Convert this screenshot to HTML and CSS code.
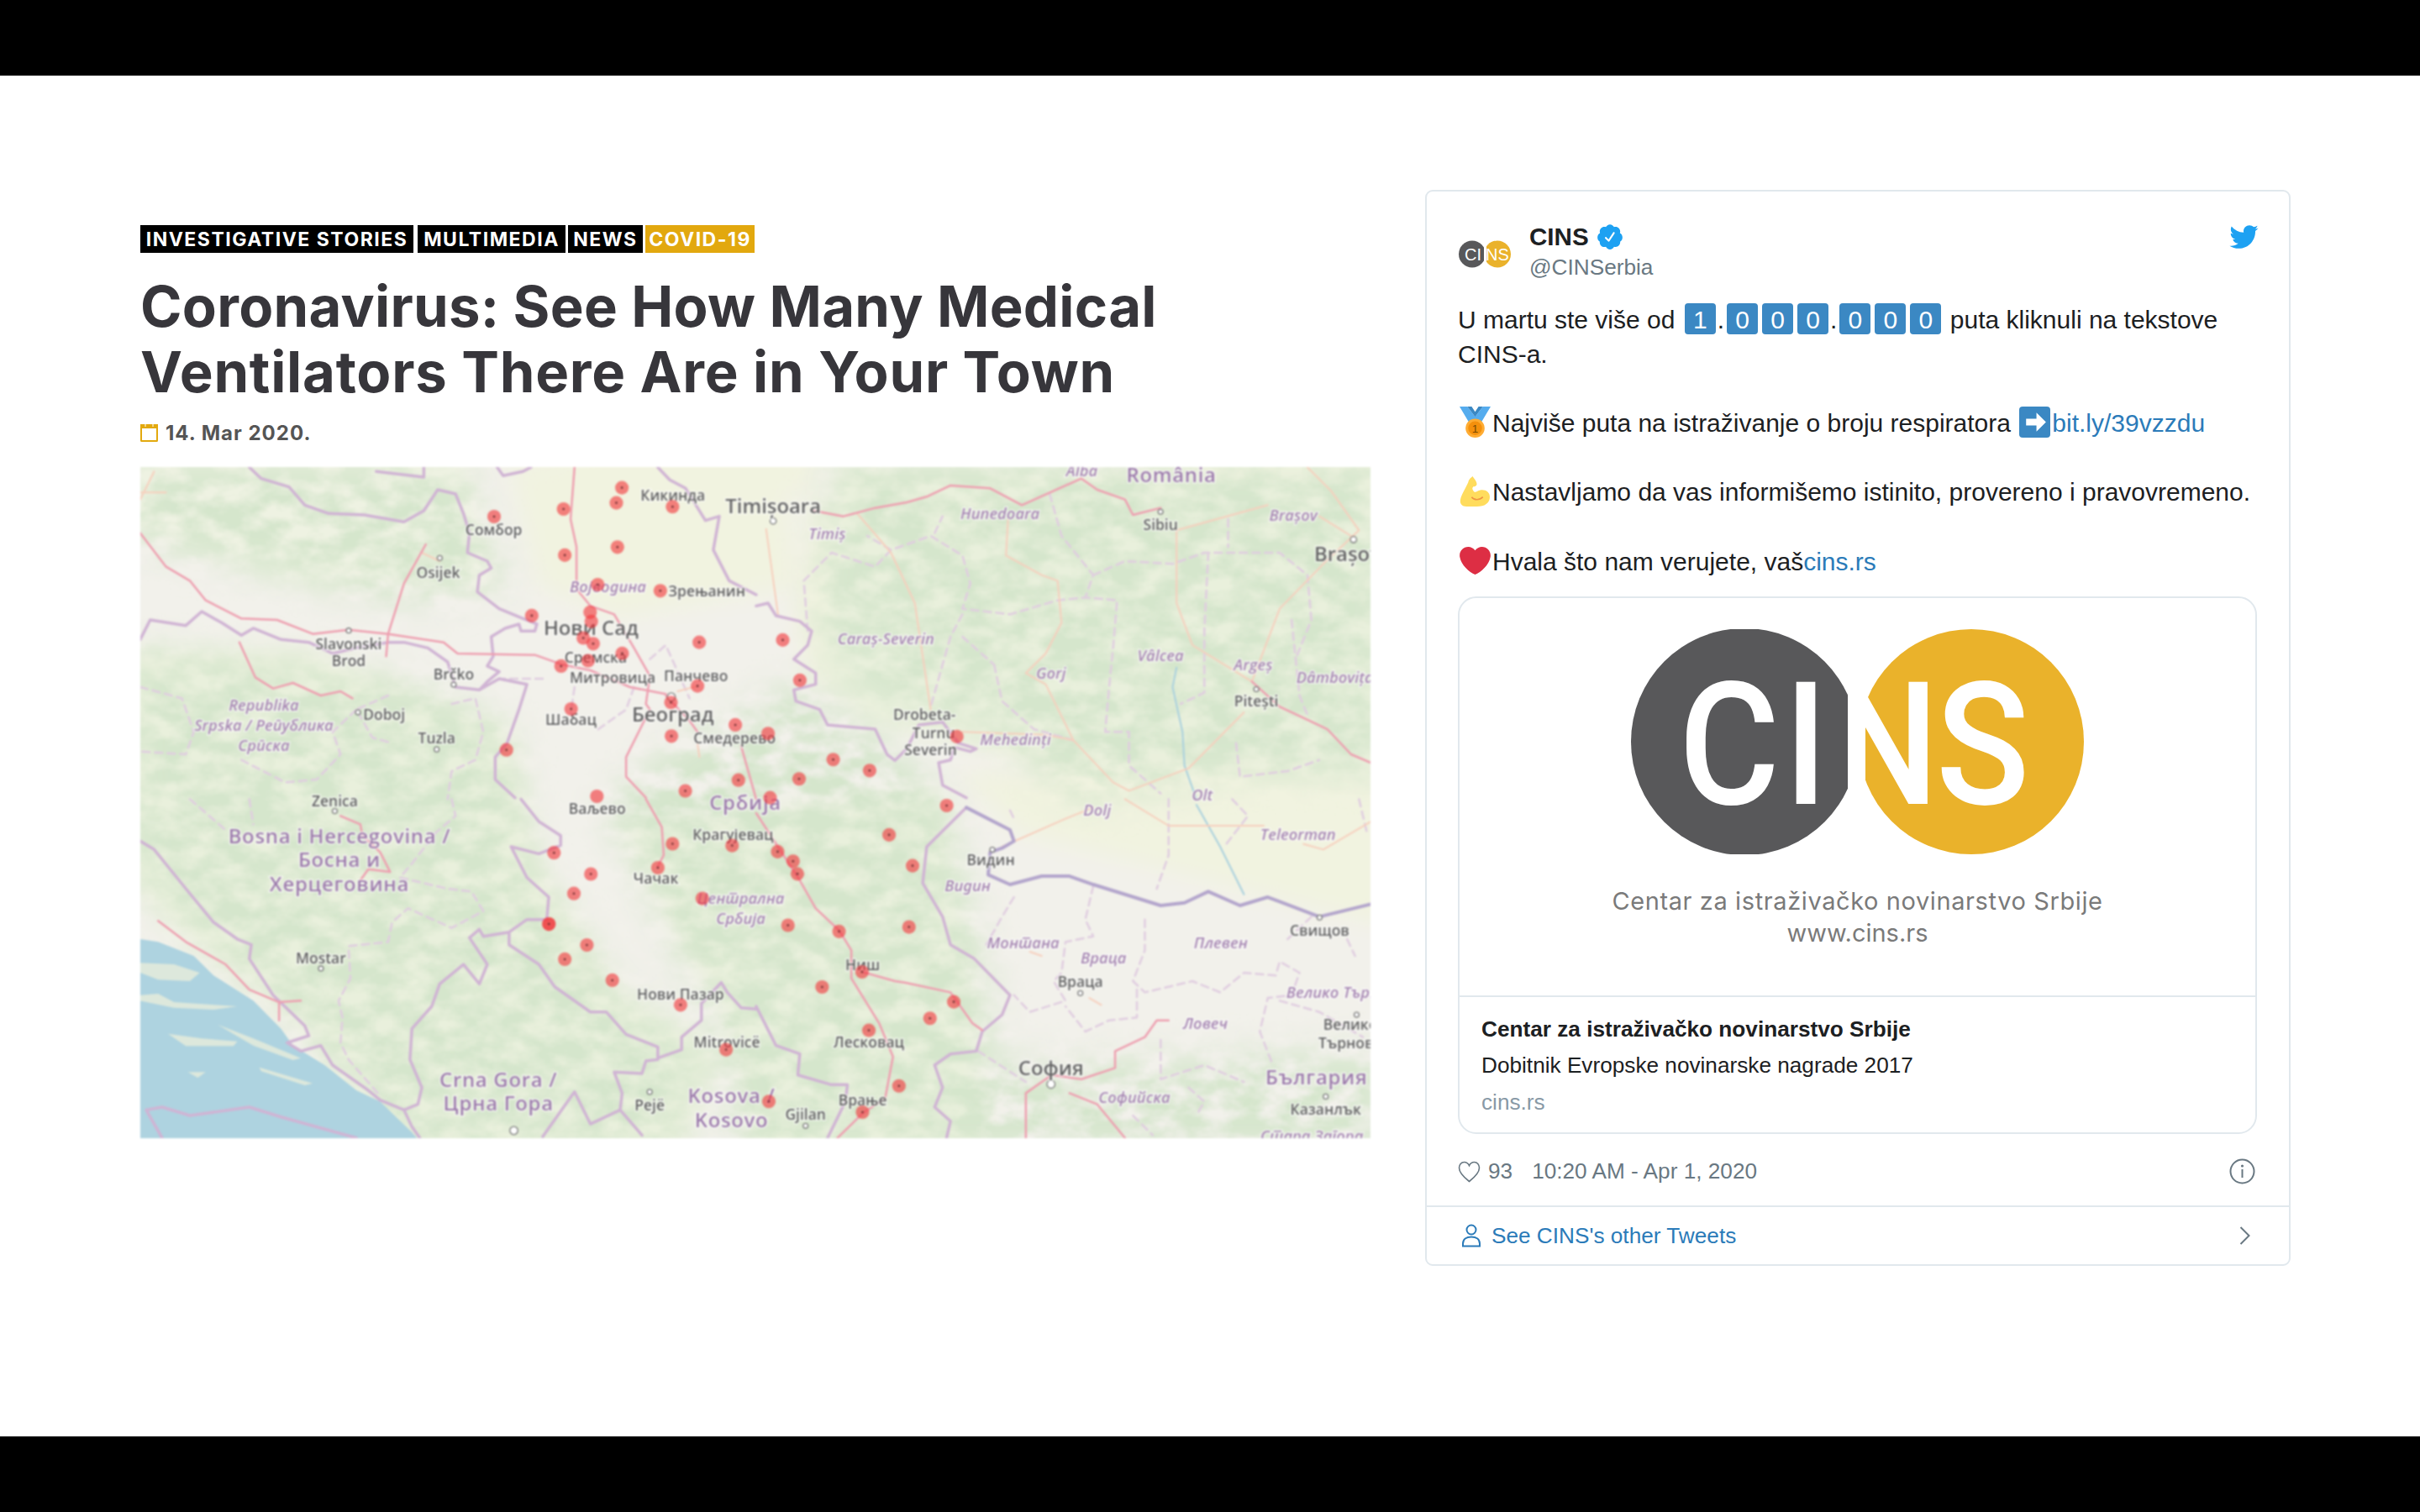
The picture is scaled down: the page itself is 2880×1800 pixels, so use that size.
FILE: index.html
```html
<!DOCTYPE html>
<html lang="sr">
<head>
<meta charset="utf-8">
<title>Coronavirus: See How Many Medical Ventilators There Are in Your Town</title>
<link rel="stylesheet" href="styles.css">
</head>
<body>
<div class="bar"></div>
<main class="main">
  <article class="story">
    <div class="tags">
      <span class="tag t1">INVESTIGATIVE STORIES</span>
      <span class="tag t2">MULTIMEDIA</span>
      <span class="tag t3">NEWS</span>
      <span class="tag t4 gold">COVID-19</span>
    </div>
    <h1 class="title"><span class="l1">Coronavirus: See How Many Medical</span><br><span class="l2">Ventilators There Are in Your Town</span></h1>
    <div class="date">
      <svg class="cal" viewBox="0 0 21 22"><path d="M1 4h19v16.5a.5.5 0 0 1-.5.5h-18a.5.5 0 0 1-.5-.5z" fill="#fff" stroke="#e3a90f" stroke-width="2"/><path d="M0 1h21v5H0z" fill="#e3a90f"/><path d="M6 0v4M15 0v4" stroke="#fff" stroke-width="1"/></svg>
      <span>14. Mar 2020.</span>
    </div>
    <svg class="map" viewBox="91 302 797 435" preserveAspectRatio="none">
      <defs>
        <filter id="mottle" filterUnits="userSpaceOnUse" x="91" y="302" width="797" height="435" color-interpolation-filters="sRGB">
          <feGaussianBlur in="SourceGraphic" stdDeviation="12" result="b"/>
          <feTurbulence type="fractalNoise" baseFrequency=".05 .08" numOctaves="5" seed="7"/>
          <feColorMatrix values="0 0 0 0 .835  0 0 0 0 .90  0 0 0 0 .80  2.6 0 0 0 -.72"/>
          <feComposite in2="b" operator="in"/>
        </filter>
        <filter id="soft" x="-10%" y="-10%" width="120%" height="120%"><feGaussianBlur stdDeviation="7"/></filter>
      </defs>
      <rect x="91" y="302" width="797" height="435" fill="#f2f1eb"/>
      <!-- plains -->
      <g filter="url(#soft)" fill="#f1f3e0">
        <path d="M300 290H530L515 400 525 440 600 470 660 490 900 570V290H760L700 400 600 400 530 320z"/>
        <path d="M620 500H900V600L780 570 660 540z"/>
        <path d="M75 290H300L320 380 200 380 75 340z" fill="#eef2e2"/>
        <path d="M330 300H510L515 380 400 400 350 380z"/>
      </g>
      <g filter="url(#soft)" fill="#e9f0dc">
        <path d="M75 420 200 420 330 470 350 560 400 640 470 680 440 750H270L190 660 110 600 75 560z"/>
        <path d="M540 300H900V510L820 500 700 500 640 480 560 470 530 420z"/>
        <path d="M400 530 520 520 610 510 630 630 640 750H490L470 660 440 610z"/>
      </g>
      <path class="mott" filter="url(#mottle)" d="M85 300 300 300 330 380 260 390 85 350zM85 420 260 440 330 470 345 560 400 640 450 680 440 745 270 745 190 660 110 590 85 560zM390 520 440 480 520 440 610 510 640 630 650 745 480 745 460 660 430 600zM540 300 895 300 895 500 800 500 700 520 640 470 560 450 530 400zM640 690 895 680 895 745 640 745z"/>
      <!-- sea -->
      <g transform="translate(87.11,517.24) scale(.25694,.18149)">
        <path class="sea" d="M15 500 60 510 150 560 200 630 300 720 370 820 400 880 480 950 560 1040 620 1080 700 1190 730 1240H0V500z"/>
        <path class="isl" d="M15 585 100 590 165 620 140 650 60 645 15 620zM15 700 60 695 100 725 260 740 200 752 100 745 15 720zM85 838 170 855 260 865 250 882 130 882zM210 805 300 855 420 925 400 932 300 880zM315 958 450 1015 430 1022 320 972zM135 975 180 975 160 995z"/>
      </g>
      <!-- admin dashed -->
      <g class="admin">
        <g transform="translate(87.11,299.45) scale(.25694,.18149)">
          <path d="M15 800 120 840 150 960 130 1040 15 1030M640 830 560 880 600 980 650 1000M800 860 860 840 880 960 860 1060 800 1100 790 1200M270 1060 380 1140 460 1130 520 1040 500 960 560 880M1110 800 1100 900M1030 770 930 770M1260 800 1240 880 1160 960M1300 700 1340 650 1400 840"/>
        </g>
        <g transform="translate(490,299.45) scale(.25694,.18149)">
          <path d="M130 600 120 420 190 320 300 370 340 310 440 260 520 330 540 430 520 520 640 540 760 490 830 480 910 490 900 660 890 800 880 960 940 960 940 1080 1020 1180M340 310 280 260M450 250 470 190M740 110 770 260 850 400 830 480M850 400 930 350 1050 360 1130 320 1320 320 1390 400 1400 560 1360 700M1190 200 1190 300M1140 320 1130 600 1130 820 1070 860M600 720 620 850 700 950 800 990M520 620 600 720M520 540 490 620 440 870M1210 1000 1220 1120 1340 1100 1420 1060M1350 560 1370 830 1390 900"/>
        </g>
        <g transform="translate(87.11,517.24) scale(.25694,.18149)">
          <path d="M140 0 230 110M290 0 300 90M800 0 810 60 760 120 700 230 670 280 790 320 850 330 880 400 800 460 690 390 650 440 640 510 540 525 545 640 515 720 525 780 520 870 540 930 620 1060"/>
        </g>
        <g transform="translate(490,517.24) scale(.25694,.18149)">
          <path d="M640 40 650 70M1040 0 1040 200 1010 320M650 350 620 420 580 520M850 310 830 430 850 490 780 510 770 620 750 650 780 720 690 760 650 700M980 430 980 540 950 650 980 690 1100 650 1170 690 1230 620 1310 630 1320 580 1370 620 1350 700 1290 710 1270 830 1300 940M960 680 960 780 890 790 830 830 780 740M1020 860 1020 1000 1130 950 1230 1010M1340 500 1400 420M560 900 680 1010M1490 500 1510 560M1320 720 1420 760 1530 850M1090 1030 1130 1080 1110 1130M950 1130 1000 1200M1200 0 1240 60 1180 170M1520 0 1540 120"/>
        </g>
      </g>
      <!-- rivers -->
      <g class="river">
        <g transform="translate(490,299.45) scale(.25694,.18149)"><path d="M1060 730 1050 800 1075 960 1080 1080 1110 1200"/></g>
        <g transform="translate(490,517.24) scale(.25694,.18149)"><path d="M1110 20 1170 170 1230 340"/></g>
      </g>
      <!-- secondary roads -->
      <g class="road2">
        <g transform="translate(490,299.45) scale(.25694,.18149)">
          <path d="M25 235 55 540M255 180 340 320 400 500 440 880M635 200 630 330 720 400 760 420 770 570 730 680 680 750 730 790 800 990 900 1140 940 1170 1090 1090 1230 890M1060 240 1290 150M1060 240 1060 500 1100 650 1250 780 1320 520 1430 360 1520 240 1450 100 1390 15M1420 190 1500 260M800 990 730 970 520 960"/>
        </g>
        <g transform="translate(490,517.24) scale(.25694,.18149)">
          <path d="M620 170 780 70 850 30M930 0 1040 95 1280 95M1380 160 1430 180 1550 80M840 710 870 735M690 545 720 560"/>
        </g>
        <g transform="translate(87.11,299.45) scale(.25694,.18149)"><path d="M15 130 50 30M15 105 80 105M725 320 770 350M1370 815 1420 796M1420 1000 1425 1050"/></g>
      </g>
      <!-- borders -->
      <g class="border">
        <g transform="translate(87.11,299.45) scale(.25694,.18149)">
          <path d="M290 15 320 55 390 85 430 150 490 180 580 185 680 210 730 170 765 95 810 110 830 180 845 250 840 320 890 350 900 375 870 400 865 460 920 520 980 555 1015 575 1010 600 975 600 970 575 935 590 900 620 905 690 890 725 920 745 890 780 870 810 810 800 790 710 740 660 680 640 640 640 560 660 500 680 440 640 370 630 300 590 270 615 220 570 170 530 130 580 40 560 15 630M870 810 920 770 990 790 970 880 940 1000 910 1050 910 1130 960 1195"/>
          <path d="M610 30 730 50 730 15M915 15 930 45 980 30 1000 15M1320 15 1350 60 1390 90 1440 205 1475 190 1460 310 1500 420 1568 470"/>
        </g>
        <g transform="translate(490,299.45) scale(.25694,.18149)">
          <path d="M0 510 30 500 50 545 110 565 140 600 130 650 95 700 150 750 150 790 95 810 100 850 160 880 180 935 300 950 330 1040 350 1062 380 1020 410 935 470 925 510 1000 555 1020 540 1030 500 1015 490 1060 460 1070 470 1150 530 1195"/>
        </g>
        <g transform="translate(87.11,517.24) scale(.25694,.18149)">
          <path d="M975 0 1020 80 1075 130 1075 165 1020 195 950 170 990 280 1045 350 1040 430 990 430 945 475 880 490 870 465 845 495 890 590 870 660 830 590 770 660 750 740 700 820 695 930 725 1030 715 1090 680 1110"/>
          <path d="M945 480 945 520 1020 590 1060 670 1150 760 1190 760 1240 840 1320 885 1320 930 1290 935 1280 980 1210 975 1230 1050 1225 1110 1150 1160 1110 1045 1030 1205M1320 925 1380 895 1380 850 1430 790 1430 730 1480 655 1495 690 1530 745 1568 750M1225 1110 1280 1200"/>
          <path d="M15 150 50 180 130 320 200 440 260 500 295 520 290 570 350 700 430 810 440 845 385 870 420 900 470 880 500 950 590 1040 620 1075 680 1110 700 1170 720 1210M30 1110 70 1100 140 1130 290 1100 370 1135 560 1210M30 1110 70 1210"/>
        </g>
        <g transform="translate(490,517.24) scale(.25694,.18149)">
          <path d="M530 30 430 170 420 300 470 420 490 520 550 570 640 700 620 770 570 830 555 900 490 910 450 950 470 1030 450 1100 490 1150 480 1210M0 740 25 810 50 880 110 910 105 985 190 1020 230 1020 225 1080 180 1210"/>
          <path class="danube" d="M530 30 640 110 650 150 620 175 590 190 585 270 640 305 720 275 790 275 850 305 1020 380 1080 370 1140 330 1220 380 1290 350 1420 420 1550 375"/>
        </g>
      </g>
      <!-- motorways -->
      <g class="road1">
        <g transform="translate(87.11,299.45) scale(.25694,.18149)">
          <path d="M15 250 80 370 140 420 180 490 270 555 360 560 450 610 540 595 640 610 780 640 815 680 1010 685 1080 720 1150 740 1250 800 1340 825M1110 15 1100 200 1115 300 1115 450 1150 510 1210 540 1260 660 1300 760 1290 860 1300 880 1240 1050 1240 1120 1290 1195M1340 830 1400 920 1420 960M1530 1010 1568 1200M735 290 680 430 640 610 635 690M265 640 305 765 350 805 400 785 470 830 520 815 550 840"/>
        </g>
        <g transform="translate(490,299.45) scale(.25694,.18149)">
          <path d="M145 170 220 190 300 160 380 140 430 120 490 80 590 90 670 150 820 55 860 95 930 130 950 185 1020 160M1250 780 1320 870 1380 910 1440 950 1500 1040 1550 1070"/>
        </g>
        <g transform="translate(87.11,517.24) scale(.25694,.18149)">
          <path d="M1290 0 1330 100 1335 200 1320 240M60 435 130 510 230 590 290 680 365 725 420 720M365 725 365 790M520 60 570 90 575 130 620 190 645 260 590 250 570 290"/>
        </g>
        <g transform="translate(490,517.24) scale(.25694,.18149)">
          <path d="M0 50 55 170 110 290 150 390 210 470 240 540 240 640 310 800 345 920 325 1070 270 1120 205 1210M267 617 350 650 375 655 490 690 545 800 570 825M1040 790 1010 790 980 850 905 900 905 960 820 1000 745 985 680 1050 680 1210M790 1050 860 1090 930 1210"/>
        </g>
      </g>
      <!-- towns -->
      <g class="dot">
        <circle cx="285" cy="361" r="1.6"/><circle cx="226" cy="408" r="1.6"/><circle cx="294" cy="443" r="1.6"/><circle cx="232" cy="461" r="1.6"/><circle cx="283" cy="485" r="1.6"/><circle cx="217" cy="525" r="1.6"/><circle cx="208" cy="627" r="1.6"/><circle cx="421" cy="707" r="1.6"/>
        <circle cx="501" cy="337" r="2"/><circle cx="752" cy="331" r="1.6"/><circle cx="877" cy="349" r="2"/><circle cx="814" cy="446" r="1.6"/><circle cx="643" cy="550" r="1.6"/><circle cx="700" cy="643" r="1.6"/><circle cx="855" cy="594" r="1.6"/><circle cx="879" cy="657" r="1.6"/><circle cx="859" cy="710" r="1.6"/><circle cx="522" cy="729" r="1.6"/>
        <circle cx="333" cy="732" r="2.6"/><circle cx="681" cy="702" r="2.6"/><circle cx="435" cy="451" r="2.6"/>
      </g>
      <!-- labels -->
      <g class="place">
        <text x="320" y="346">Сомбор</text><text x="284" y="374">Osijek</text><text x="436" y="324">Кикинда</text><text x="458" y="386">Зрењанин</text>
        <text x="226" y="420">Slavonski</text><text x="226" y="431">Brod</text><text x="294" y="440">Brčko</text><text x="249" y="466">Doboj</text><text x="283" y="481">Tuzla</text><text x="217" y="522">Zenica</text>
        <text x="386" y="429">Сремска</text><text x="397" y="442">Митровица</text><text x="451" y="441">Панчево</text><text x="370" y="469">Шабац</text><text x="476" y="481">Смедерево</text>
        <text x="387" y="527">Ваљево</text><text x="475" y="544">Крагујевац</text><text x="425" y="572">Чачак</text><text x="441" y="647">Нови Пазар</text><text x="471" y="678">Mitrovicë</text><text x="421" y="719">Pejë</text><text x="522" y="725">Gjilan</text>
        <text x="208" y="624">Mostar</text><text x="563" y="678">Лесковац</text><text x="559" y="628">Ниш</text><text x="559" y="716">Врање</text>
        <text x="642" y="560">Видин</text><text x="700" y="639">Враца</text><text x="855" y="606">Свищов</text><text x="875" y="667">Велико</text><text x="875" y="679">Търново</text><text x="859" y="722">Казанлък</text>
        <text x="599" y="466">Drobeta-</text><text x="605" y="478">Turnu</text><text x="603" y="489">Severin</text><text x="752" y="343">Sibiu</text><text x="814" y="457">Pitești</text>
      </g>
      <g class="place big">
        <text x="501" y="332">Timișoara</text><text x="383" y="411">Нови Сад</text><text x="436" y="467">Београд</text><text x="681" y="696">София</text><text x="873" y="363">Brașov</text>
      </g>
      <g class="reg">
        <text x="394" y="383">Војводина</text><text x="171" y="460">Republika</text><text x="171" y="473">Srpska / Република</text><text x="171" y="486">Српска</text>
        <text x="536" y="349">Timiș</text><text x="574" y="417">Caraș-Severin</text><text x="648" y="336">Hunedoara</text><text x="701" y="308">Alba</text><text x="838" y="337">Brașov</text>
        <text x="681" y="439">Gorj</text><text x="752" y="428">Vâlcea</text><text x="812" y="434">Argeș</text><text x="865" y="442">Dâmbovița</text><text x="658" y="482">Mehedinți</text>
        <text x="711" y="528">Dolj</text><text x="779" y="518">Olt</text><text x="841" y="544">Teleorman</text><text x="627" y="577">Видин</text><text x="663" y="614">Монтана</text>
        <text x="715" y="624">Враца</text><text x="791" y="614">Плевен</text><text x="781" y="666">Ловеч</text><text x="735" y="714">Софийска</text><text x="872" y="646">Велико Търново</text><text x="850" y="739">Стара Загора</text>
        <text x="480" y="585">Централна</text><text x="480" y="598">Србија</text>
      </g>
      <g class="area">
        <text x="759" y="312">România</text><text x="220" y="546">Bosna i Hercegovina /</text><text x="220" y="561">Босна и</text><text x="220" y="577">Херцеговина</text>
        <text x="323" y="704">Crna Gora /</text><text x="323" y="719">Црна Гора</text><text x="474" y="714">Kosova /</text><text x="474" y="730">Kosovo</text><text x="483" y="524">Србија</text><text x="853" y="702">България</text>
      </g>
      <!-- pins -->
      <g class="pins">
        <circle cx="320.2" cy="334.1"/><circle cx="365.2" cy="329.2"/><circle cx="403" cy="315.4"/><circle cx="399.4" cy="325.2"/><circle cx="435.8" cy="327.7"/><circle cx="366" cy="359.1"/><circle cx="400.1" cy="353.9"/><circle cx="387.3" cy="378.2"/><circle cx="427.9" cy="382.2"/><circle cx="344.6" cy="398.3"/><circle cx="382.4" cy="396.1"/><circle cx="383.2" cy="402.1"/><circle cx="378" cy="412.8"/><circle cx="384.4" cy="416.5"/><circle cx="403.2" cy="422.8"/><circle cx="381.1" cy="427.5"/><circle cx="363.6" cy="431"/><circle cx="453.1" cy="415.6"/><circle cx="452" cy="443.9"/><circle cx="434.8" cy="454.6"/><circle cx="370.1" cy="458.8"/><circle cx="476.5" cy="469.1"/><circle cx="435.1" cy="476.4"/><circle cx="328.2" cy="485.3"/><circle cx="478.5" cy="504.9"/><circle cx="444.1" cy="511.9"/><circle cx="386.8" cy="515.4"/>
        <circle cx="507.2" cy="414.1"/><circle cx="518.3" cy="440.2"/><circle cx="497.7" cy="474.7"/><circle cx="620" cy="476.7"/><circle cx="539.9" cy="491.6"/><circle cx="563.5" cy="498.7"/><circle cx="517.8" cy="504.1"/><circle cx="499" cy="516.3"/>
        <circle cx="359" cy="552"/><circle cx="382.9" cy="565.8"/><circle cx="371.9" cy="578.4"/><circle cx="355.7" cy="598.2"/><circle cx="355.7" cy="598.2"/><circle cx="380.3" cy="611.8"/><circle cx="366" cy="621"/><circle cx="396.8" cy="634.6"/><circle cx="441" cy="650.6"/><circle cx="470.5" cy="679.6"/><circle cx="426.3" cy="561.7"/><circle cx="435.8" cy="546.2"/><circle cx="474.4" cy="547.3"/><circle cx="455.1" cy="581.6"/>
        <circle cx="613.4" cy="521.4"/><circle cx="576.1" cy="540.4"/><circle cx="591.3" cy="560.4"/><circle cx="503.9" cy="551.3"/><circle cx="513.9" cy="557.5"/><circle cx="516.7" cy="565.7"/><circle cx="510.6" cy="599"/><circle cx="543.7" cy="603"/><circle cx="589" cy="600.1"/><circle cx="558.6" cy="629.2"/><circle cx="532.7" cy="639"/><circle cx="618" cy="648.6"/><circle cx="602.6" cy="659.3"/><circle cx="563" cy="667.1"/><circle cx="582.5" cy="703.1"/><circle cx="558.9" cy="720.1"/><circle cx="498.2" cy="713.2"/>
      </g>
      <g class="pincore">
        <circle cx="320.2" cy="334.1"/><circle cx="365.2" cy="329.2"/><circle cx="403" cy="315.4"/><circle cx="399.4" cy="325.2"/><circle cx="435.8" cy="327.7"/><circle cx="366" cy="359.1"/><circle cx="400.1" cy="353.9"/><circle cx="387.3" cy="378.2"/><circle cx="427.9" cy="382.2"/><circle cx="344.6" cy="398.3"/><circle cx="378" cy="412.8"/><circle cx="384.4" cy="416.5"/><circle cx="403.2" cy="422.8"/><circle cx="363.6" cy="431"/><circle cx="453.1" cy="415.6"/><circle cx="452" cy="443.9"/><circle cx="434.8" cy="454.6"/><circle cx="370.1" cy="458.8"/><circle cx="476.5" cy="469.1"/><circle cx="435.1" cy="476.4"/><circle cx="328.2" cy="485.3"/><circle cx="478.5" cy="504.9"/><circle cx="444.1" cy="511.9"/><circle cx="507.2" cy="414.1"/><circle cx="518.3" cy="440.2"/><circle cx="539.9" cy="491.6"/><circle cx="563.5" cy="498.7"/><circle cx="517.8" cy="504.1"/><circle cx="359" cy="552"/><circle cx="382.9" cy="565.8"/><circle cx="371.9" cy="578.4"/><circle cx="355.7" cy="598.2"/><circle cx="380.3" cy="611.8"/><circle cx="366" cy="621"/><circle cx="396.8" cy="634.6"/><circle cx="441" cy="650.6"/><circle cx="470.5" cy="679.6"/><circle cx="426.3" cy="561.7"/><circle cx="435.8" cy="546.2"/><circle cx="474.4" cy="547.3"/><circle cx="613.4" cy="521.4"/><circle cx="576.1" cy="540.4"/><circle cx="591.3" cy="560.4"/><circle cx="503.9" cy="551.3"/><circle cx="513.9" cy="557.5"/><circle cx="516.7" cy="565.7"/><circle cx="510.6" cy="599"/><circle cx="543.7" cy="603"/><circle cx="589" cy="600.1"/><circle cx="558.6" cy="629.2"/><circle cx="532.7" cy="639"/><circle cx="618" cy="648.6"/><circle cx="602.6" cy="659.3"/><circle cx="563" cy="667.1"/><circle cx="582.5" cy="703.1"/><circle cx="558.9" cy="720.1"/><circle cx="498.2" cy="713.2"/>
      </g>
    </svg>
  </article>

  <aside class="tweet">
    <div class="tw-body">
      <header class="tw-head">
        <svg class="avatar" viewBox="0 0 64 34">
          <circle cx="17" cy="18" r="16" fill="#58585a"/><circle cx="47" cy="18" r="16" fill="#eab22b"/>
          <rect x="31" y="0" width="3" height="34" fill="#fff"/>
          <text class="av-txt" x="8" y="25">CI</text><text class="av-txt" x="33" y="25">NS</text>
        </svg>
        <div class="who">
          <div class="name">CINS
            <svg class="badge" viewBox="0 0 24 24"><path d="M22.5 12.5c0-1.58-.875-2.95-2.148-3.6.154-.435.238-.905.238-1.4 0-2.21-1.71-3.998-3.818-3.998-.47 0-.92.084-1.336.25C14.818 2.415 13.51 1.5 12 1.5s-2.816.917-3.437 2.25c-.415-.165-.866-.25-1.336-.25-2.11 0-3.818 1.79-3.818 4 0 .494.083.964.237 1.4-1.272.65-2.147 2.018-2.147 3.6 0 1.495.782 2.798 1.942 3.486-.02.17-.032.34-.032.514 0 2.21 1.708 4 3.818 4 .47 0 .92-.086 1.335-.25.62 1.334 1.926 2.25 3.437 2.25 1.512 0 2.818-.916 3.437-2.25.415.163.865.248 1.336.248 2.11 0 3.818-1.79 3.818-4 0-.174-.012-.344-.033-.513 1.158-.687 1.943-1.99 1.943-3.484zm-6.616-3.334l-4.334 6.5c-.145.217-.382.334-.625.334-.143 0-.288-.04-.416-.126l-.115-.094-2.415-2.415c-.293-.293-.293-.768 0-1.06s.768-.294 1.06 0l1.77 1.767 3.825-5.74c.23-.345.696-.436 1.04-.207.346.23.44.696.21 1.04z" fill="#1da1f2"/></svg>
          </div>
          <div class="handle">@CINSerbia</div>
        </div>
        <svg class="bird" viewBox="0 0 24 24"><path d="M23.643 4.937c-.835.37-1.732.62-2.675.733.962-.576 1.7-1.49 2.048-2.578-.9.534-1.897.922-2.958 1.13-.85-.904-2.06-1.47-3.4-1.47-2.572 0-4.658 2.086-4.658 4.66 0 .364.042.718.12 1.06-3.873-.195-7.304-2.05-9.602-4.868-.4.69-.63 1.49-.63 2.342 0 1.616.823 3.043 2.072 3.878-.764-.025-1.482-.234-2.11-.583v.06c0 2.257 1.605 4.14 3.737 4.568-.392.106-.803.162-1.227.162-.3 0-.593-.028-.877-.082.593 1.85 2.313 3.198 4.352 3.234-1.595 1.25-3.604 1.995-5.786 1.995-.376 0-.747-.022-1.112-.065 2.062 1.323 4.51 2.093 7.14 2.093 8.57 0 13.255-7.098 13.255-13.254 0-.2-.005-.402-.014-.602.91-.658 1.7-1.477 2.323-2.41z" fill="#1da1f2"/></svg>
      </header>
      <p class="tw-text">U martu ste više od <span class="key">1</span>.<span class="key">0</span><span class="key">0</span><span class="key">0</span>.<span class="key">0</span><span class="key">0</span><span class="key">0</span> puta kliknuli na tekstove<br>CINS-a.<br><br><svg class="emo" viewBox="0 0 36 36"><path d="M0 0h9l9 12 9-12h9L23 22H13z" fill="#55acee"/><path d="M9 0 18 12 27 0h-5l-4 6-4-6z" fill="#3b88c3"/><circle cx="18" cy="25" r="11" fill="#ffac33"/><circle cx="18" cy="25" r="8" fill="#f4900c"/><text class="medal-n" x="18" y="30">1</text></svg>Najviše puta na istraživanje o broju respiratora <svg class="emo" viewBox="0 0 36 36"><rect width="36" height="36" rx="4" fill="#3b88c3"/><path d="M31 18 20 7v7H8v8h12v7z" fill="#fff"/></svg><a class="lnk">bit.ly/39vzzdu</a><br><br><svg class="emo" viewBox="0 0 36 36"><path d="M15 1c-2 2-4 3-5 7C8 13 2 22 1 28c-1 5 2 8 7 8h12c9 0 15-4 15-11 0-6-5-9-11-8-3 .5-5 3-7 2-2-2-3-4-1-6 2 0 4-1 4-3 0-3-3-6-5-9z" fill="#ffdc5d"/><path d="M14 25c3 4 9 4 13 0" fill="none" stroke="#ef9645" stroke-width="1.6"/></svg>Nastavljamo da vas informišemo istinito, provereno i pravovremeno.<br><br><svg class="emo" viewBox="0 0 36 36"><path d="M35.885 11.833c0-5.45-4.418-9.868-9.867-9.868-3.308 0-6.227 1.633-8.018 4.129-1.791-2.496-4.71-4.129-8.017-4.129-5.45 0-9.868 4.417-9.868 9.868 0 .772.098 1.52.266 2.241C1.751 22.587 11.216 31.568 18 34.034c6.783-2.466 16.249-11.447 17.617-19.959.17-.721.268-1.469.268-2.242z" fill="#dd2e44"/></svg>Hvala što nam verujete, vaš<a class="lnk">cins.rs</a></p>
      <section class="card">
        <div class="card-img">
          <svg class="logo" viewBox="1942 750 540 268">
            <defs>
              <clipPath id="lc"><rect x="1900" y="700" width="300" height="400"/></clipPath>
              <clipPath id="rc"><rect x="2221" y="700" width="300" height="400"/></clipPath>
              <clipPath id="rt"><rect x="2200" y="700" width="300" height="400"/></clipPath>
            </defs>
            <circle cx="2077" cy="884" r="135" fill="#58585a" clip-path="url(#lc)"/>
            <circle cx="2347" cy="884" r="134" fill="#eab22b" clip-path="url(#rc)"/>
            <g transform="translate(1999,958) scale(.9,1)"><text class="logo-t" x="0 139">CI</text></g>
            <g clip-path="url(#rt)"><g transform="translate(2178,958) scale(.9,1)"><text class="logo-t" x="0 141">NS</text></g></g>
          </svg>
          <div class="logo-cap">Centar za istraživačko novinarstvo Srbije</div>
          <div class="logo-url">www.cins.rs</div>
        </div>
        <div class="card-meta">
          <div class="c-title">Centar za istraživačko novinarstvo Srbije</div>
          <div class="c-desc">Dobitnik Evropske novinarske nagrade 2017</div>
          <div class="c-dom">cins.rs</div>
        </div>
      </section>
      <footer class="tw-foot">
        <svg class="ic-heart" viewBox="0 0 27 26"><path d="M13.5 24.5C9 21 1.5 15 1.5 8.3 1.5 4.5 4 1.5 7.5 1.5c2.6 0 4.8 1.6 6 4.2 1.2-2.6 3.400-4.200 6-4.200 3.500 0 6 3 6 6.800 0 6.700-7.500 12.700-12 16.200z" fill="none" stroke="#697882" stroke-width="1.6"/></svg>
        <span class="count">93</span>
        <span class="time">10:20 AM - Apr 1, 2020</span>
        <svg class="ic-info" viewBox="0 0 31 31"><circle cx="15.500" cy="15.500" r="14" fill="none" stroke="#697882" stroke-width="2"/><circle cx="15.500" cy="9" r="1.600" fill="#697882"/><path d="M15.500 13v10" stroke="#697882" stroke-width="2"/></svg>
      </footer>
    </div>
    <div class="tw-more">
      <svg class="ic-user" viewBox="0 0 24 28"><circle cx="12" cy="7" r="5.500" fill="none" stroke="#2b7bb9" stroke-width="2"/><path d="M2 26.500v-3c0-5 4-8 10-8s10 3 10 8v3z" fill="none" stroke="#2b7bb9" stroke-width="2"/></svg>
      <a class="more-l">See CINS's other Tweets</a>
      <svg class="ic-chev" viewBox="0 0 13 22"><path d="M1.500 1 11.500 11 1.500 21" fill="none" stroke="#697882" stroke-width="2"/></svg>
    </div>
  </aside>
</main>
<div class="bar"></div>
</body>
</html>
```

FILE: styles.css
```css
* { box-sizing: border-box; }
html, body { margin: 0; padding: 0; }
body { background: #fff; width: 2880px; height: 1800px; display: flex; flex-direction: column; font-family: "Liberation Sans", Arial, sans-serif; }
.bar { height: 90px; flex: none; background: #000; }
.main { flex: 1; display: flex; align-items: flex-start; padding: 136px 0 0 167px; gap: 65px; }

.story { width: 1464px; flex: none; padding-top: 42px; font-family: Inter, "Liberation Sans", sans-serif; }
.tags { display: flex; height: 33px; }
.tag { display: flex; align-items: center; justify-content: center; height: 33px; background: #000; color: #fff; font-weight: 700; font-size: 23px; letter-spacing: 1.5px; white-space: nowrap; }
.t1 { width: 325px; margin-right: 5px; }
.t2 { width: 176px; margin-right: 3px; }
.t3 { width: 89px; margin-right: 3px; }
.t4 { width: 130px; }
.gold { background: #e2a80e; }
.title { margin: 25px 0 0; font-size: 67px; line-height: 78px; font-weight: 700; color: #37363b; white-space: nowrap; }
.l1 { letter-spacing: .28px; }
.l2 { letter-spacing: .77px; }
.date { display: flex; align-items: center; gap: 9px; margin-top: 21px; height: 24px; font-size: 24px; font-weight: 700; color: #555; letter-spacing: 1px; }
.cal { width: 21px; height: 22px; flex: none; }
.map { display: block; width: 1464px; height: 799px; margin-top: 29px; filter: blur(1px); }

.mott { fill: #000; }
.sea { fill: #aed3e0; }
.isl { fill: #dde8dc; }
.admin path, .river path, .road2 path, .border path, .road1 path { fill: none; vector-effect: non-scaling-stroke; stroke-linejoin: round; stroke-linecap: round; }
.admin path { stroke: #e0cde0; stroke-width: 2.5; stroke-dasharray: 9 6; }
.river path { stroke: #a8d0de; stroke-width: 2; }
.road2 path { stroke: #f7cfbd; stroke-width: 2; }
.border path { stroke: #d0b4d4; stroke-width: 3.5; }
.border .danube { stroke: #b3a5cc; stroke-width: 4; }
.road1 path { stroke: #ee9fb0; stroke-width: 2.5; }
.dot circle { fill: #fff; stroke: #777; stroke-width: .7; }
.place text, .reg text, .area text { font-family: "Open Sans", "Noto Sans", sans-serif; text-anchor: middle; paint-order: stroke; stroke: rgba(255,255,255,.7); stroke-width: 1.4px; }
.place text { font-size: 9.5px; fill: #5f5f5f; font-weight: 600; }
.place.big text { font-size: 13px; fill: #636363; font-weight: 600; }
.reg text { font-size: 10px; fill: #a484b0; font-style: italic; font-weight: 600; }
.area text { font-size: 13px; fill: #9c7bab; font-weight: 600; letter-spacing: .4px; }
.pins circle { r: 4.4px; fill: rgba(242,55,60,.62); }
.pincore circle { r: .7px; fill: #6b2c30; }

.tweet { width: 1030px; height: 1281px; flex: none; border: 2px solid #e1e8ed; border-radius: 9px; display: flex; flex-direction: column; color: #1c2022; }
.tw-body { flex: 1; padding: 0 38px 0 37px; border-bottom: 2px solid #e1e8ed; }
.tw-head { display: flex; align-items: flex-start; height: 132px; padding-top: 36px; }
.avatar { width: 64px; height: 35px; margin-top: 20px; flex: none; }
.av-txt { font-size: 20px; fill: #fff; font-family: "Liberation Sans", sans-serif; font-weight: 400; }
.who { margin-left: 21px; flex: 1; }
.name { display: flex; align-items: center; font-weight: 700; font-size: 29.6px; line-height: 36px; }
.badge { width: 34px; height: 34px; margin-left: 8px; }
.handle { font-size: 26.2px; line-height: 36px; color: #697882; margin-top: 0; }
.bird { width: 36px; height: 36px; flex: none; margin: 0 -2px 0 0; }
.tw-text { margin: 0; font-size: 30px; line-height: 41.1px; color: #1c2022; }
.key { display: inline-block; width: 37px; height: 37px; line-height: 40px; margin: 0 2px 0 3px; background: #3b88c3; color: #fff; border-radius: 4px; text-align: center; font-size: 30px; vertical-align: .5px; }
.emo { display: inline-block; width: 37px; height: 37px; margin: 0 2px 0 2px; vertical-align: -7px; }
.medal-n { font-size: 13px; fill: #7a4a00; text-anchor: middle; font-family: "Liberation Sans", sans-serif; }
.lnk { color: #2b7bb9; }

.card { margin-top: 21px; width: 951px; height: 640px; border: 2px solid #e1e8ed; border-radius: 22px; overflow: hidden; display: flex; flex-direction: column; }
.card-img { height: 475px; flex: none; display: flex; flex-direction: column; align-items: center; padding-top: 37px; border-bottom: 2px solid #e1e8ed; }
.logo { width: 540px; height: 268px; display: block; flex: none; }
.logo-t { font-family: Roboto, "Liberation Sans", sans-serif; font-size: 204px; font-weight: 500; fill: #fff; }
.logo-cap, .logo-url { font-family: Inter, sans-serif; color: #7a7a7a; }
.logo-cap { margin-top: 37px; font-size: 29px; letter-spacing: .6px; line-height: 38px; }
.logo-url { font-size: 29px; line-height: 38px; }
.card-meta { padding: 17px 26px 0; }
.c-title { font-weight: 700; font-size: 26.2px; line-height: 43px; color: #1c2022; }
.c-desc { font-size: 26.2px; line-height: 43px; color: #1c2022; }
.c-dom { font-size: 26.2px; line-height: 45px; color: #8899a6; }

.tw-foot { display: flex; align-items: center; height: 46px; margin-top: 22px; color: #697882; font-size: 26.2px; }
.ic-heart { width: 27px; height: 26px; flex: none; }
.count { margin-left: 9px; }
.time { margin-left: 23px; flex: 1; }
.ic-info { width: 31px; height: 31px; flex: none; margin-right: 2px; }
.tw-more { height: 68px; flex: none; display: flex; align-items: center; padding: 0 46px 0 41px; font-size: 26.2px; color: #2b7bb9; }
.ic-user { width: 24px; height: 28px; flex: none; }
.more-l { margin-left: 12px; flex: 1; }
.ic-chev { width: 13px; height: 22px; flex: none; }
```
